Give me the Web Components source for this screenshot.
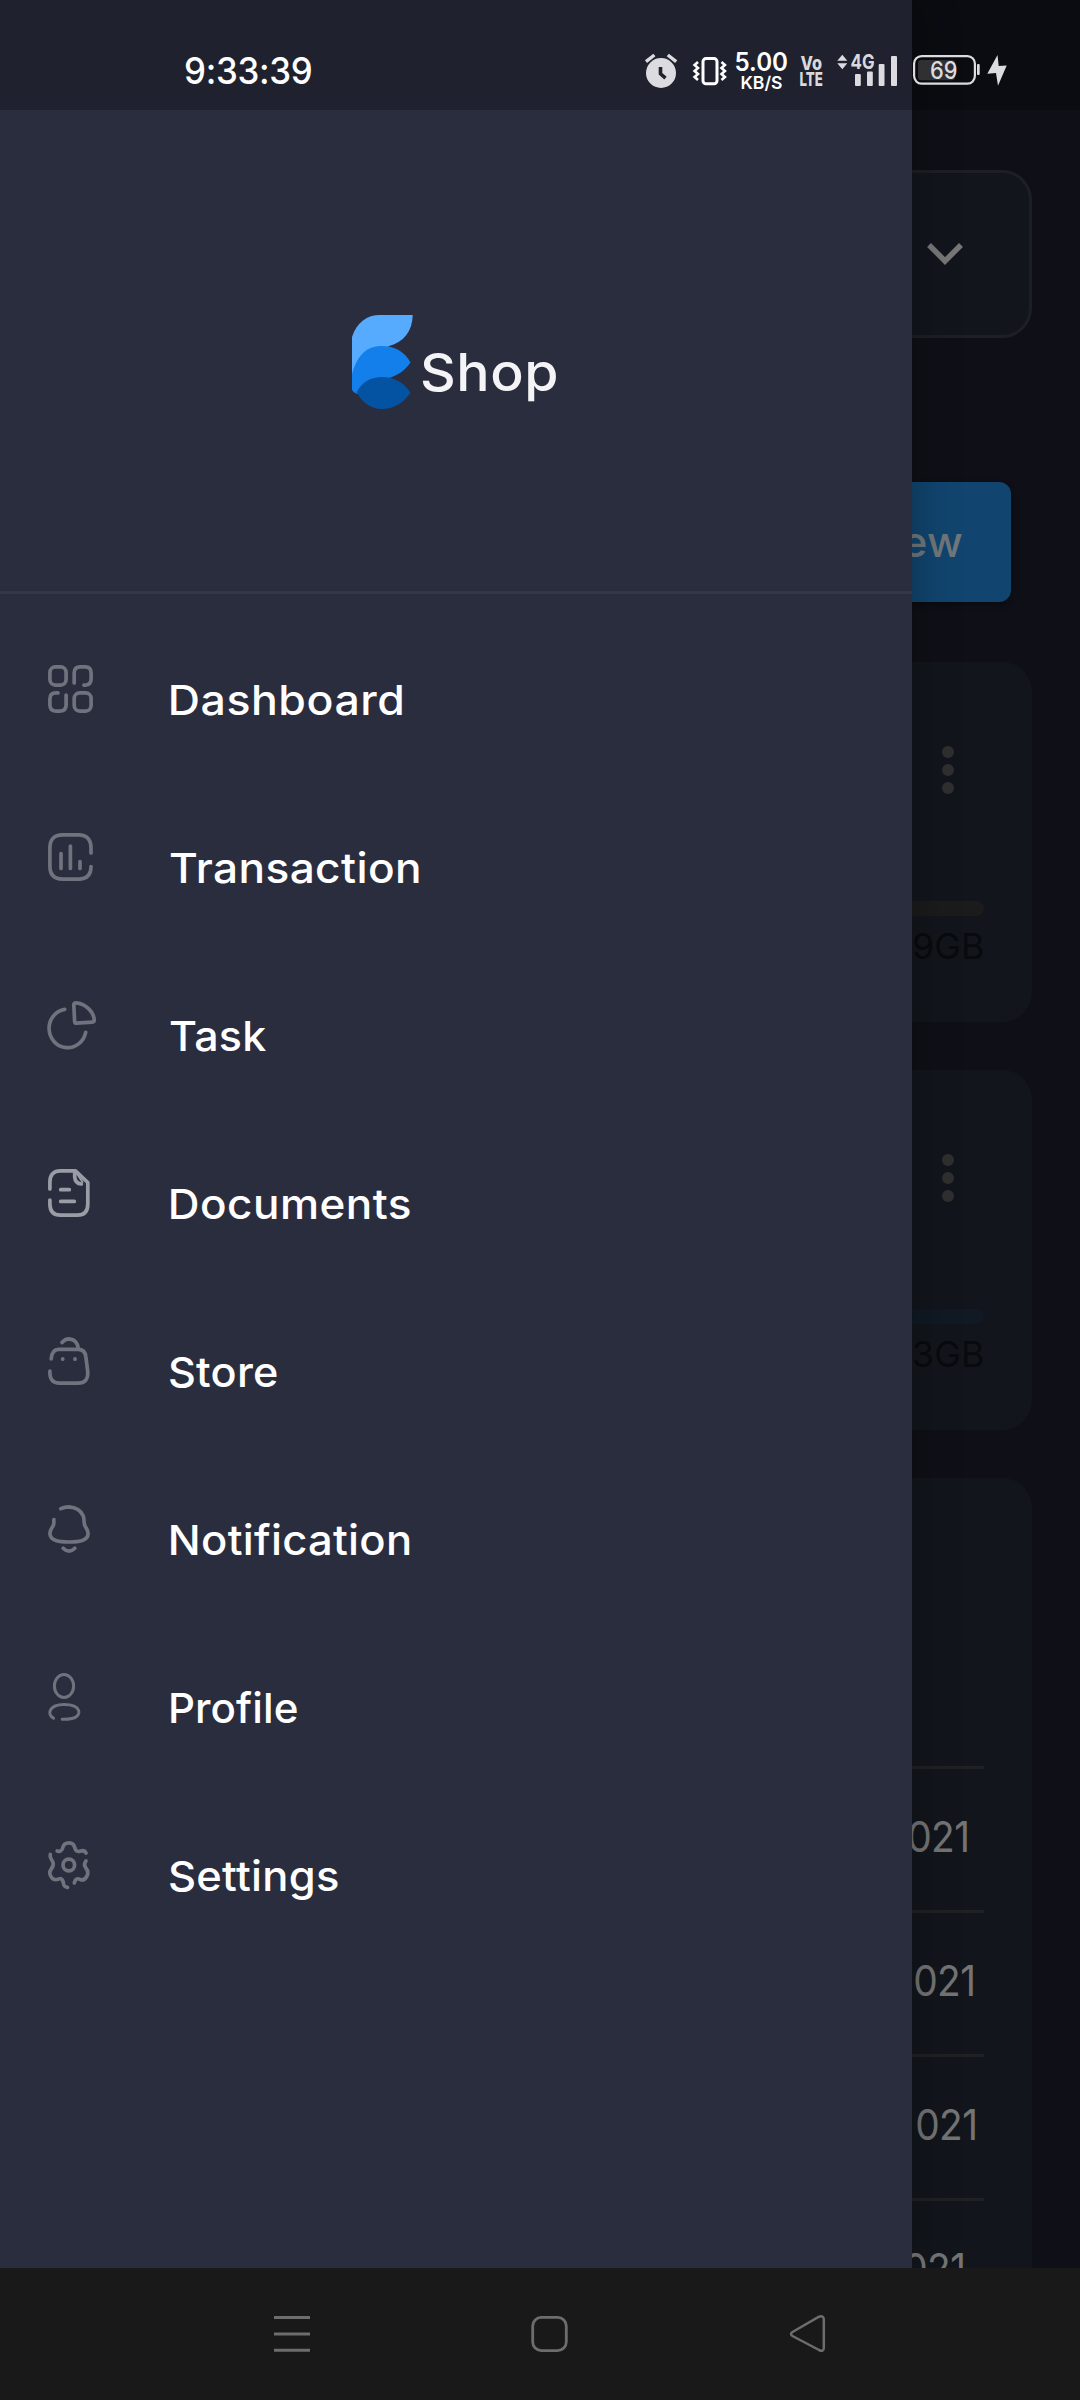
<!DOCTYPE html>
<html lang="en">
<head>
<meta charset="utf-8">
<title>Shop</title>
<style>
html,body{margin:0;padding:0;background:#191919}
body{width:1080px;height:2400px;overflow:hidden;font-family:Inter,"Liberation Sans",sans-serif}
files-page,side-drawer,status-bar{grid-area:1/1}
</style>
</head>
<body>
<app-shell>
  <files-page slot="page"></files-page>
  <side-drawer slot="drawer">
    <shop-logo slot="header"></shop-logo>
    <drawer-item icon="dashboard" w="231" x="171">Dashboard</drawer-item>
    <drawer-item icon="transaction" w="248.5" x="169.5">Transaction</drawer-item>
    <drawer-item icon="task" w="96" x="169.5">Task</drawer-item>
    <drawer-item icon="documents" w="239" x="171">Documents</drawer-item>
    <drawer-item icon="store" w="107" x="170">Store</drawer-item>
    <drawer-item icon="notification" w="238" x="171">Notification</drawer-item>
    <drawer-item icon="profile" w="126" x="171">Profile</drawer-item>
    <drawer-item icon="settings" w="168" x="170">Settings</drawer-item>
  </side-drawer>
  <status-bar slot="status"></status-bar>
  <nav-bar slot="nav"></nav-bar>
</app-shell>
<script>
const define = (name, html, setup) => customElements.define(name, class extends HTMLElement {
  connectedCallback() {
    if (this.shadowRoot) return;
    const t = document.createElement('template');
    t.innerHTML = typeof html === 'function' ? html(this) : html;
    this.attachShadow({mode: 'open'}).append(t.content.cloneNode(true));
    if (setup) setup(this);
  }
});

/* Text whose inked width is fitted to the w attribute by a horizontal scale. */
const pen = document.createElement('canvas').getContext('2d');
define('fit-text', `<style>:host{display:block;white-space:pre;line-height:1.2;flex:none}span{display:block;width:max-content;transform-origin:0 50%}</style><span><slot></slot></span>`, el => {
  const size = +el.getAttribute('size'), weight = el.getAttribute('weight') || 400;
  const w = +el.getAttribute('w'), text = el.textContent.trim();
  pen.font = `${weight} ${size}px Inter`;
  const m = pen.measureText(text);
  const ink = m.actualBoundingBoxRight + m.actualBoundingBoxLeft;
  /* A small share of the difference goes to tracking, the rest to the glyph widths. */
  const track = (w - ink) * .2 / (text.length - 1);
  const scale = w / (ink + track * (text.length - 1));
  el.style.fontSize = size + 'px';
  el.style.fontWeight = weight;
  el.style.width = w + 'px';
  const span = el.shadowRoot.querySelector('span');
  span.style.letterSpacing = track + 'px';
  span.style.transform = `scaleX(${scale}) translateX(${m.actualBoundingBoxLeft}px)`;
});

define('app-shell', `<style>
:host{display:flex;flex-direction:column;width:1080px;height:2400px}
.stage{display:grid;grid-template:2268px/1080px;overflow:hidden}
</style><div class="stage"><slot name="page"></slot><slot name="drawer"></slot><slot name="status"></slot></div><slot name="nav"></slot>`);

define('status-bar', `<style>
:host{display:block;z-index:2;height:110px;background:rgba(0,0,0,.25);color:#fff}
.row{display:flex;height:110px;align-items:center;padding-left:186px;box-sizing:border-box}
svg{display:block;margin-left:328.500px}
fit-text{margin-top:32px}
svg text{font-family:Inter,sans-serif}
</style><div class="row"><fit-text size="37" weight="500" w="125.5">9:33:39</fit-text>
<svg width="380" height="110" viewBox="640 0 380 110" fill="none">
<g stroke="#dcdce0" stroke-width="3.4"><path d="M646 61.6l8.4-6.6M667.8 55l8.4 6.6"/></g>
<circle cx="661" cy="73" r="15" fill="#dcdce0"/><path d="M660.5 67v6.8l5 4.4" stroke="#20222e" stroke-width="3.6"/>
<rect x="703" y="58.6" width="14" height="25.2" rx="3" stroke="#fff" stroke-width="3"/>
<path d="M698 62l-3.4 3 3.4 3-3.4 3 3.4 3-3.4 3 3.4 3M721.5 62l3.4 3-3.4 3 3.4 3-3.4 3 3.4 3-3.4 3" stroke="#fff" stroke-width="2.6"/>
<g fill="#fff" font-weight="600"><text x="734.5" y="70.7" font-size="25.5" textLength="53.5" lengthAdjust="spacingAndGlyphs">5.00</text>
<text x="740.5" y="88.5" font-size="17.5" textLength="42" lengthAdjust="spacingAndGlyphs">KB/S</text></g>
<g fill="#d9d9dd" font-weight="800"><text x="800.5" y="69.6" font-size="19" textLength="21.5" lengthAdjust="spacingAndGlyphs">Vo</text>
<text x="799.5" y="85.700" font-size="19" textLength="23.5" lengthAdjust="spacingAndGlyphs">LTE</text>
<text x="850.5" y="69" font-size="20.500" font-weight="700" textLength="24" lengthAdjust="spacingAndGlyphs">4G</text></g>
<g fill="#dcdce0"><path d="M837.3 60.7h10l-5-6zM837.3 63.2h10l-5 6z"/>
<rect x="855" y="74" width="5.8" height="12" rx="1"/><rect x="867" y="71.5" width="5.8" height="14.5" rx="1"/><rect x="878.7" y="64" width="5.8" height="22" rx="1"/><rect x="891" y="56" width="6" height="30" rx="1"/>
<rect x="977" y="64" width="2.7" height="11" rx="1"/><path d="M997.5 55 987.3 73.8 996 73 998 85.7 1006.7 65.5 998.7 66z"/></g>
<rect x="918" y="60" width="37" height="20.3" rx="3" fill="#303033"/>
<rect x="914.1" y="56.1" width="60.8" height="27.5" rx="7.5" stroke="#dcdce0" stroke-width="2.2"/>
<text x="930" y="79" font-size="24" font-weight="500" fill="#dcdce0" textLength="27.5" lengthAdjust="spacingAndGlyphs">69</text>
</svg></div>`);

define('shop-logo', `<style>
:host{display:flex;align-items:flex-start;gap:9px;filter:blur(.7px);color:#f4f4f6}
svg{display:block;flex:none}fit-text{margin-top:27px}
</style><svg width="61" height="95" viewBox="0 0 61 95"><path fill="#56abff" d="M0 23C5 8 15 1 28 1H60.7C60.5 17 52 28 37 32L16 50 0 62z"/><path fill="#127fea" d="M0 60C5 42 14 32 30 32 43 32 53 38 58.5 48.5 53 56 47 61 37 64L20 78 5 80Q1 78 0 76z"/><path fill="#0353a2" d="M4.7 78C10 68 19 63 30 63 42 63 53 69 58.5 79 51 89 42 95 30 95 19 95 9 88 4.7 78z"/></svg>
<fit-text size="52.5" weight="500" w="134">Shop</fit-text>`);

define('side-drawer', `<style>
:host{display:flex;flex-direction:column;width:912px;height:2268px;background:#2a2d3e;z-index:1;box-shadow:0 0 44px rgba(0,0,0,.3)}
header{display:flex;height:594px;box-sizing:border-box;padding:314px 0 0 352px;border-bottom:3px solid #343747}
nav{display:flex;flex-direction:column;padding-top:22px}
</style><header><slot name="header"></slot></header><nav><slot></slot></nav>`);

const icons = {
dashboard: '<rect x="1.9" y="1.9" width="16.2" height="18.2" rx="5.5"/><path d="M26.2 18V7.9q0-6 6-6h4.9q6 0 6 6v6.200q0 6-6 6h-1.200M10 27.900H7.900q-6 0-6 6v6.200q0 6 6 6h4.200q6 0 6-6V30"/><rect x="26.2" y="27.9" width="16.9" height="18.2" rx="5.5"/>',
transaction: '<path d="M43 20V15Q43 1.9 30.500 1.900h-16Q1.900 1.900 1.900 15v18Q1.900 46.100 14.500 46.100h16Q43 46.100 43 33.500"/><path d="M13 20.500v15M22.400 13v22.500M32 28.500v7"/>',
task: '<path d="M16.700 8.300A18.500 19.300 0 1 0 37.700 31.300M28 1.900C37 2.300 46.300 11 46.200 19.300q0 1.700-1.800 1.800L28.500 22.200q-1.800.1-1.900-1.800L25.800 4q-.1-2.100 2.200-2.100z"/>',
documents: '<path d="M1.900 20V13Q1.900 1.900 12.500 1.900H27.500L39.800 13.500V35Q39.800 46.100 29.500 46.100H12.500Q1.900 46.100 1.900 35V31M26.700 3V8Q27.200 14.500 33.300 15M12.700 20.700H21.300M12.700 32.400H26.300"/><path stroke-width="2" d="M28.500 4 34.500 13"/>',
store: '<path d="M14 5.500Q17 1.900 21 1.900 29.500 2.500 30.300 12M3.200 21.800Q4 12.300 10.500 12.300H30Q37.200 12.300 37.900 20L39.700 34.500Q40.600 46.100 30 46.100H11.500Q1.300 46.100 1.900 34"/><path d="M14.700 21.800v.4M27 21.800v.4"/>',
notification: '<path d="M12.800 3.700Q16.500 1.900 21 1.900 31.500 2.500 35.300 11C36.500 14.500 35.500 18 37 21S40.100 25 40.100 28.500 37.500 34.500 33.500 35.800 25.500 37 21 37 12 37 8.500 35.800 1.900 32 1.900 28.500 3.500 23.500 5 21 5.500 17.500 5.900 14.500M15.200 43.200Q21 49 26.800 43.200"/>',
profile: '<g stroke-width="3"><ellipse cx="16" cy="13" rx="9.600" ry="11.500"/><path d="M5.500 45.200C-1.500 41.500 1 31.500 16 31.500 33.500 31.500 35 43 24 45.500Q20 46.400 14.200 46.300"/></g>',
settings: '<circle cx="20.800" cy="24" r="5.800"/><path d="M9.200 10C12 11 14.300 9.500 14.800 6.500 15.500 3.500 17.500 1.900 21 1.900S26 3.500 26.700 6.500C27.500 10 29.500 11 32 10.200S37 9.800 38 12M2.300 13.500C1.200 17 4 18.500 5 21.500S5 26 3 28.500 1.500 34 4 37 9.500 38.500 11.500 37.700 15 39.500 15.500 42.500 17 46 19.500 46.400M26.300 42C27 38 29.500 37 32 38.300S37 38.500 38.700 35.500 40.200 30 38.200 27.500 35.500 23 38 20"/>'
};
define('drawer-item', el => `<style>
:host{display:flex;height:168px;align-items:center;color:#fff}
svg{display:block;flex:none;margin:-22px 0 0 48px;overflow:visible}
fit-text{margin:2px 0 0 ${el.getAttribute('x') - 96}px}
</style><svg width="48" height="48" viewBox="0 0 48 48" fill="none" stroke="${el.getAttribute('icon') === 'documents' ? '#9a9ca6' : '#70727e'}" stroke-width="3.7" stroke-linecap="round" stroke-linejoin="round">${icons[el.getAttribute('icon')]}</svg>
<fit-text size="41.5" weight="500" w="${el.getAttribute('w')}">${el.textContent}</fit-text>`);

define('storage-card', el => `<style>
:host{display:flex;flex-direction:column;align-items:flex-end;box-sizing:border-box;height:360px;padding:84px 48px 0 0;border-radius:30px;background:#12161c;color:#090a0e}
svg{display:block;margin-right:30px}
.bar{width:888px;height:15px;margin-top:107px;border-radius:7.5px;background:${el.getAttribute('bar')}}
fit-text{margin:9px 2px 0 0}
</style><svg width="12" height="48" fill="#2f2f2f"><circle cx="6" cy="6" r="6"/><circle cx="6" cy="24" r="6"/><circle cx="6" cy="42" r="6"/></svg><div class="bar"></div><fit-text size="35" w="68.5">${el.getAttribute('size')}</fit-text>`);

define('date-row', el => `<style>
:host{display:flex;box-sizing:border-box;height:144px;border-top:3px solid #202125;align-items:center;justify-content:flex-end;padding:0 ${el.getAttribute('end')}px 6px 0;color:#747475}
</style><fit-text size="42.5" w="58">${el.textContent}</fit-text>`);

define('files-page', `<style>
:host{display:flex;flex-direction:column;box-sizing:border-box;width:1080px;height:2268px;padding:170px 48px 0;background:#0f1017;overflow:hidden}
.search{display:flex;flex:none;box-sizing:border-box;height:168px;border:3px solid #1e1e26;border-radius:30px;background:#12161c;justify-content:flex-end;align-items:center;padding-right:66px}
.add{display:flex;flex:none;box-sizing:border-box;width:300px;height:120px;margin:144px 21px 60px auto;border-radius:12px;background:#11456f;box-shadow:0 3px 6px rgba(0,0,0,.3);color:#70777b;align-items:center;justify-content:flex-end;padding-right:49px}
storage-card{flex:none;margin-bottom:48px}
.recent{display:flex;flex:none;flex-direction:column;box-sizing:border-box;height:900px;padding:288px 48px 0;border-radius:30px;background:#12161c}
date-row{flex:none}
</style>
<div class="search"><svg width="36" height="24" viewBox="0 0 36 24" fill="none" stroke="#777778" stroke-width="5.5"><path d="M2 3 18 19 34 3"/></svg></div>
<div class="add"><fit-text size="42" weight="500" w="59">ew</fit-text></div>
<storage-card bar="#1c1b1c" size="9GB"></storage-card>
<storage-card bar="#101924" size="3GB"></storage-card>
<div class="recent"><date-row end="17">021</date-row><date-row end="11.5">021</date-row><date-row end="9.5">021</date-row><date-row end="21">021</date-row></div>`);

define('nav-bar', `<style>
:host{display:flex;box-sizing:border-box;height:132px;padding:46px 253px 0 273px;justify-content:space-between;background:#191919}
svg{display:block}
</style>
<svg width="38" height="40" stroke="#6d6d6d" stroke-width="3"><path d="M1 3.6H37M1 20H37M1 36.3H37"/></svg>
<svg width="38" height="40" fill="none" stroke="#6d6d6d" stroke-width="2.8"><rect x="1.7" y="3.4" width="33.6" height="33.2" rx="8.5"/></svg>
<svg width="38" height="40" fill="none" stroke="#6d6d6d" stroke-width="2.5"><path d="M3.5 18 29.5 3Q34.8.9 34.800 5.500V34Q34.800 38.300 30 36L3.500 22Q.500 20 3.500 18z"/></svg>`);
</script>
</body>
</html>
